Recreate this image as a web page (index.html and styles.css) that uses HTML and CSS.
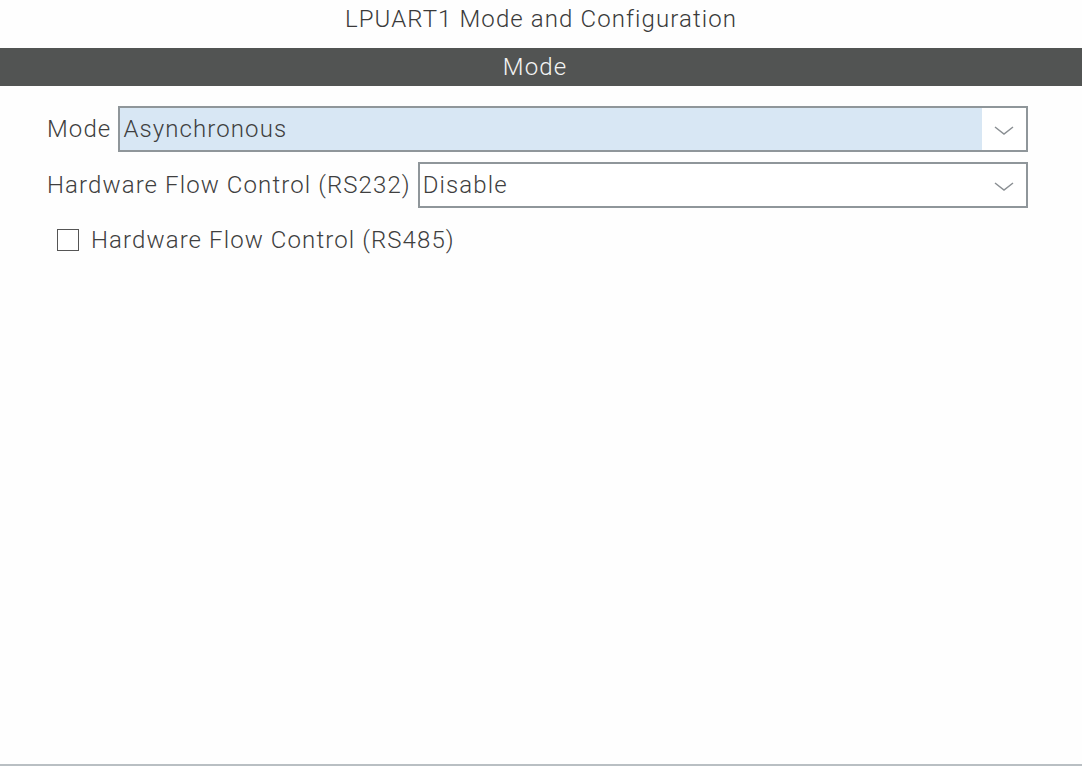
FILE: index.html
```html
<!DOCTYPE html>
<html>
<head>
<meta charset="utf-8">
<link rel="stylesheet" href="styles.css">
</head>
<body>
<div class="page">
  <div class="title">LPUART1 Mode and Configuration</div>
  <div class="section-bar">Mode</div>
  <div class="form">
    <div class="row">
      <span class="label">Mode</span>
      <div class="select selected">
        <span class="value">Asynchronous</span>
        <span class="arrow"><svg width="20" height="9" viewBox="0 0 20 9"><path d="M1 1 L10 8 L19 1" fill="none" stroke="#8a8f93" stroke-width="1.5"/></svg></span>
      </div>
    </div>
    <div class="row">
      <span class="label">Hardware Flow Control (RS232)</span>
      <div class="select">
        <span class="value">Disable</span>
        <span class="arrow"><svg width="20" height="9" viewBox="0 0 20 9"><path d="M1 1 L10 8 L19 1" fill="none" stroke="#8a8f93" stroke-width="1.5"/></svg></span>
      </div>
    </div>
    <label class="check-row">
      <span class="checkbox"></span>
      <span class="check-label">Hardware Flow Control (RS485)</span>
    </label>
  </div>
  <div class="spacer"></div>
  <div class="bottom-line"></div>
</div>
</body>
</html>
```

FILE: styles.css
```css
html, body {
  margin: 0;
  padding: 0;
  background: #fefefe;
}
body {
  font-family: Roboto, "Liberation Sans", sans-serif;
  font-size: 24px;
  font-weight: 300;
  color: #3f3f3f;
  letter-spacing: 1.1px;
}
.page {
  width: 1082px;
  height: 766px;
  display: flex;
  flex-direction: column;
}
.title {
  height: 48px;
  line-height: 38px;
  text-align: center;
  color: #3a3a3a;
}
.section-bar {
  height: 38px;
  line-height: 38px;
  background: #525453;
  color: #f4f4f4;
  text-align: center;
  padding-right: 12px;
}
.form {
  padding: 20px 54px 0 47px;
  display: flex;
  flex-direction: column;
}
.row {
  display: flex;
  align-items: center;
  gap: 7px;
  margin-bottom: 10px;
}
.label {
  white-space: nowrap;
}
.select {
  flex: 1;
  height: 42px;
  border: 2px solid #8f969a;
  background: #fff;
  display: flex;
  align-items: center;
}
.select .value {
  flex: 1;
  height: 100%;
  line-height: 42px;
  padding-left: 3px;
}
.select.selected .value {
  background: #d8e7f4;
}
.arrow {
  width: 44px;
  display: flex;
  justify-content: center;
  align-items: center;
  padding-top: 2px;
}
.check-row {
  display: flex;
  align-items: center;
  margin-top: 8px;
  padding-left: 10px;
}
.checkbox {
  width: 20px;
  height: 20px;
  border: 1.5px solid #555;
  background: #fff;
  margin-right: 12px;
}
.spacer {
  flex: 1;
}
.bottom-line {
  height: 2px;
  background: #b9bfc3;
}
```
